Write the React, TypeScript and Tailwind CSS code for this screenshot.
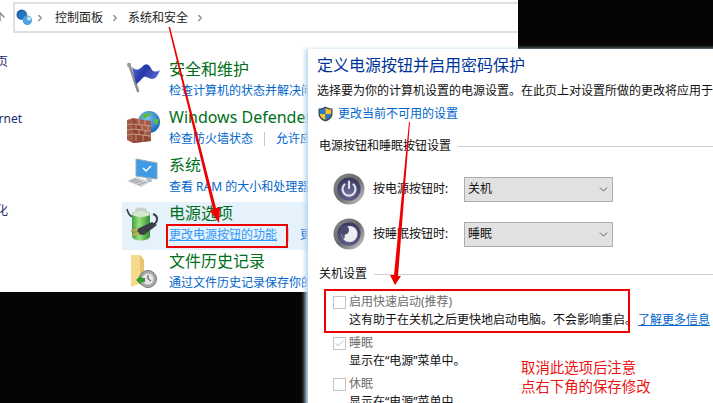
import { ArrowUp, ChevronDown, ChevronRight, Check } from "lucide-react";

const font = "font-['Noto_Sans','Noto_Sans_CJK_SC',sans-serif]";

function FlagIcon() {
  return (
    <svg width="36" height="32" viewBox="0 0 36 32">
      <defs>
        <linearGradient id="flag" x1="0" y1="0" x2="1" y2="0.4">
          <stop offset="0" stopColor="#5c70d8" />
          <stop offset="0.5" stopColor="#2437a8" />
          <stop offset="1" stopColor="#5568cc" />
        </linearGradient>
      </defs>
      <path d="M3 2L12 29" stroke="#8f8f8f" strokeWidth="2.6" strokeLinecap="round" />
      <circle cx="3" cy="3" r="2" fill="#9a9a9a" />
      <path d="M6 5C11 10 14 7 18 3C22 1 24 4 26 8C28 10 31 10 34 8C32 13 30 17 26 17C22 17 21 14 18 15C15 17 13 21 10 22Z" fill="url(#flag)" />
    </svg>
  );
}

function FirewallIcon() {
  return (
    <svg width="36" height="34" viewBox="0 0 36 34">
      <defs>
        <radialGradient id="globe" cx="0.4" cy="0.35" r="0.7">
          <stop offset="0" stopColor="#7cc8f5" />
          <stop offset="1" stopColor="#1560c0" />
        </radialGradient>
      </defs>
      <circle cx="23" cy="12" r="11" fill="url(#globe)" />
      <path d="M15 7C18 3 23 2 26 4C24 7 20 6 19 9Z" fill="#5fbb3c" />
      <path d="M28 8L33 10L31 15L28 13Z" fill="#5fbb3c" />
      <path d="M1 10L7 8L25 11V31L7 33L1 30Z" fill="#a45a45" />
      <path d="M7 8V33L25 31" fill="#8f4836" />
      <path d="M1 15L7 14L25 16M1 20L7 19L25 21M1 25L7 24L25 26M13 9V14M19 10V15M10 14V19M16 15V20M22 15V20M13 19V25M19 20V26M10 24V31M17 25V31" stroke="#d3a796" strokeWidth="0.8" fill="none" />
    </svg>
  );
}

function MonitorIcon() {
  return (
    <svg width="34" height="30" viewBox="0 0 34 30">
      <path d="M10 1L31 5V21L10 18Z" fill="#3f9be4" stroke="#8fa9bb" strokeWidth="1" />
      <path d="M17 10L20 13L25 8" stroke="#ffffff" strokeWidth="1.5" fill="none" />
      <path d="M20 20L21 24H26L25 20Z" fill="#b5bcc2" />
      <path d="M1 23L10 19L24 24L15 29Z" fill="#cfd3d6" />
      <path d="M4 23L10 21M6 24L13 22M9 25L16 23M12 27L20 24" stroke="#9aa0a5" strokeWidth="1" />
    </svg>
  );
}

function BatteryIcon() {
  return (
    <svg width="34" height="36" viewBox="0 0 34 36">
      <defs>
        <linearGradient id="batt" x1="0" y1="0" x2="1" y2="0">
          <stop offset="0" stopColor="#3e9f3e" />
          <stop offset="0.4" stopColor="#9be07f" />
          <stop offset="1" stopColor="#2f8f35" />
        </linearGradient>
      </defs>
      <path d="M1 3C2 8 4 10 7 11" stroke="#3b4046" strokeWidth="1.6" fill="none" />
      <path d="M27 8C33 10 32 17 26 19" stroke="#3b4046" strokeWidth="2" fill="none" />
      <ellipse cx="15" cy="4" rx="6" ry="2.5" fill="#c8d0c8" />
      <path d="M6 8C6 4 24 4 24 8V30C24 36 6 36 6 30Z" fill="url(#batt)" />
      <ellipse cx="15" cy="8" rx="9" ry="3" fill="#d4e8cf" />
      <path d="M11 23L26 16L31 19L18 29L12 28Z" fill="#3a3f45" />
      <path d="M12 23L5 25M13 27L6 29" stroke="#c9a64e" strokeWidth="2" />
    </svg>
  );
}

function HistoryIcon() {
  return (
    <svg width="34" height="34" viewBox="0 0 34 34">
      <path d="M5 1H14L18 6V28L5 33Z" fill="#f5d98c" />
      <path d="M14 1L18 6V28L14 30Z" fill="#e6c470" />
      <circle cx="22" cy="25" r="8.5" fill="#a8aaa8" stroke="#777" strokeWidth="1" />
      <circle cx="22" cy="25" r="5.5" fill="#e6e6e6" />
      <path d="M22 21V25L25 27" stroke="#444" strokeWidth="1" fill="none" />
      <path d="M10 26L15 21V24H19V28H15V31Z" fill="#2f9a2f" />
    </svg>
  );
}

function ControlPanelIcon() {
  return (
    <svg width="17" height="17" viewBox="0 0 18 18">
      <circle cx="6" cy="6" r="5.5" fill="#1a5fa8" />
      <path d="M1 6L8 1L12 5L10 11L4 10Z" fill="#2a74bd" />
      <circle cx="12" cy="12" r="5" fill="#4fa3dc" />
      <path d="M12 12V8A4 4 0 0 1 16 12Z" fill="#cfe8f7" />
    </svg>
  );
}

function ShieldIcon() {
  return (
    <svg width="15" height="16" viewBox="0 0 15 16">
      <path d="M7.5 0.5C10 2 12 2.6 14.5 2.6V8C14.5 11.8 11 14.5 7.5 15.5C4 14.5 0.5 11.8 0.5 8V2.6C3 2.6 5 2 7.5 0.5Z" fill="#3c4a5c" />
      <path d="M7.5 2V8H1.8V3.6C3.8 3.5 5.6 3 7.5 2Z" fill="#2c78c9" />
      <path d="M7.5 2C9.4 3 11.2 3.5 13.2 3.6V8H7.5Z" fill="#f7c331" />
      <path d="M1.8 8H7.5V14C4.5 13 2 11 1.8 8Z" fill="#f7c331" />
      <path d="M7.5 8H13.2C13 11 10.5 13 7.5 14Z" fill="#2c78c9" />
    </svg>
  );
}

function ButtonIcon({ kind, id }: { kind: "power" | "sleep"; id: string }) {
  return (
    <svg width="32" height="32" viewBox="0 0 32 32">
      <defs>
        <linearGradient id={id + "ring"} x1="0" y1="0" x2="1" y2="1">
          <stop offset="0" stopColor="#8a8a8c" />
          <stop offset="0.5" stopColor="#6a6a6e" />
          <stop offset="1" stopColor="#d0d0d0" />
        </linearGradient>
        <radialGradient id={id + "core"} cx="0.5" cy="0.7" r="0.7">
          <stop offset="0" stopColor="#6f7099" />
          <stop offset="1" stopColor="#35355a" />
        </radialGradient>
      </defs>
      <circle cx="16" cy="16" r="15.5" fill={`url(#${id}ring)`} />
      <circle cx="16" cy="16" r="11.5" fill={`url(#${id}core)`} />
      {kind === "power" ? (
        <path d="M11.5 11.5A6.5 6.5 0 1 0 20.5 11.5M16 8.5V15" stroke="#e2e2ea" strokeWidth="2.2" fill="none" strokeLinecap="round" />
      ) : (
        <>
          <circle cx="16.5" cy="16" r="8" fill="#eeeef2" />
          <path d="M12 9.5A8 8 0 0 0 11 21.5C12.5 17 12 13 12 9.5Z" fill="#55557a" />
          <circle cx="11.5" cy="12" r="4.5" fill="#4a4a6e" />
        </>
      )}
    </svg>
  );
}

function CpRow({ icon, title, links, active }: { icon: React.ReactNode; title: string; links: string[]; active?: boolean }) {
  return (
    <div className={`flex h-12 ${active ? "bg-[#e5f1fb]" : ""}`}>
      <div className="w-[47px] pl-1 pt-1 shrink-0">{icon}</div>
      <div className="min-w-0">
        <div className="h-6 leading-6 mt-[-1px] text-[16px] text-[#00701a] whitespace-nowrap">{title}</div>
        <div className="flex items-center h-[19px] text-[12px] leading-[19px] text-[#0066cc] whitespace-nowrap">
          {links.map((l, i) => (
            <span key={l} className={i > 0 ? "ml-[11px] pl-[11px] border-l border-[#c8c8c8] leading-[14px]" : ""}>
              <span className={active && i === 0 ? "underline text-[#3399ff]" : ""}>{l}</span>
            </span>
          ))}
        </div>
      </div>
    </div>
  );
}

function PowerSelect({ label, value, kind, id }: { label: string; value: string; kind: "power" | "sleep"; id: string }) {
  return (
    <div className="flex items-center h-8 pl-[25px]">
      <ButtonIcon kind={kind} id={id} />
      <div className="w-[99px] pl-2 text-[12px] text-[#111]">{label}</div>
      <div className="w-[149px] h-[25px] flex items-center justify-between pl-[3px] pr-[2px] bg-[#e1e1e1] border border-[#adadad] text-[12px] text-[#111]">
        {value}
        <ChevronDown size={13} strokeWidth={1.5} className="text-[#444]" />
      </div>
    </div>
  );
}

function SectionHead({ text }: { text: string }) {
  return (
    <div className="flex items-center gap-[7px] pl-[11px] h-[18px] text-[12px] text-[#111]">
      <span className="whitespace-nowrap">{text}</span>
      <div className="grow h-px bg-[#cfcfcf]" />
    </div>
  );
}

function PowerOption({ label, desc, checked, extra }: { label: string; desc: string; checked?: boolean; extra?: boolean }) {
  return (
    <div className="pl-[25px]">
      <div className="flex items-center h-4 text-[12px] text-[#6d6d6d]">
        <div className="w-[13px] h-[13px] bg-white border border-[#c4c4c4] flex items-center justify-center mr-[3px]">
          {checked && <Check size={11} strokeWidth={1.5} className="text-[#9a9a9a]" />}
        </div>
        {label}
      </div>
      <div className="flex items-center h-[18px] mt-[1px] pl-4 text-[12px] text-[#111] whitespace-nowrap">
        {desc}
        {extra && <span className="ml-[1px] text-[#0066cc] underline">了解更多信息</span>}
      </div>
    </div>
  );
}

export default function App() {
  return (
    <div className={`relative w-[713px] h-[403px] bg-[#050505] overflow-hidden ${font}`}>
      {/* control panel window */}
      <div className="w-[518px] h-[292px] bg-white overflow-hidden">
        <div className="flex h-[58px]">
          <div className="w-[13px] pt-[10px] text-[#777] overflow-hidden">
            <ArrowUp size={14} strokeWidth={2} className="-ml-[7px]" />
          </div>
          <div className="grow h-[31px] mt-[2px] flex items-center pl-px border-2 border-r-0 border-[#e0e0e0] text-[12px] text-[#222]">
            <ControlPanelIcon />
            <ChevronRight size={10} strokeWidth={3} className="ml-[2px] mr-[10px] text-[#888]" />
            控制面板
            <ChevronRight size={10} strokeWidth={3} className="ml-[7px] mr-[8px] text-[#888]" />
            系统和安全
            <ChevronRight size={10} strokeWidth={3} className="ml-[7px] text-[#888]" />
          </div>
        </div>
        <div className="flex">
          <div className="w-[122px] shrink-0 text-[12px] text-[#1a2b6b]">
            <div className="w-[8px] flex justify-end whitespace-nowrap h-4 leading-4 -mt-[4px]">控制面板主页</div>
            <div className="w-[22px] flex justify-end whitespace-nowrap h-4 leading-4 mt-[41px]">网络和 Internet</div>
            <div className="w-[8px] flex justify-end whitespace-nowrap h-4 leading-4 mt-[76px]">外观和个性化</div>
          </div>
          <div className="grow min-w-0">
            <CpRow icon={<FlagIcon />} title="安全和维护" links={["检查计算机的状态并解决问题"]} />
            <CpRow icon={<FirewallIcon />} title="Windows Defender 防火墙" links={["检查防火墙状态", "允许应用通过 Windows 防火墙"]} />
            <CpRow icon={<MonitorIcon />} title="系统" links={["查看 RAM 的大小和处理器速度"]} />
            <CpRow icon={<BatteryIcon />} title="电源选项" links={["更改电源按钮的功能", "更改计算机睡眠时间"]} active />
            <CpRow icon={<HistoryIcon />} title="文件历史记录" links={["通过文件历史记录保存你的文件备份副本"]} />
          </div>
        </div>
      </div>

      {/* power buttons dialog */}
      <div className="absolute left-[308px] top-[49px] w-[420px] h-[370px] bg-white shadow-[-3px_0_4px_#bcd9f2]">
        <div className="pl-[9px] pt-1 h-7 leading-6 text-[16px] text-[#003399] whitespace-nowrap">定义电源按钮并启用密码保护</div>
        <div className="pl-[9px] h-[18px] mt-[5px] leading-[18px] text-[12px] text-[#111] whitespace-nowrap">选择要为你的计算机设置的电源设置。在此页上对设置所做的更改将应用于所有电源计划。</div>
        <div className="flex items-center gap-[5px] pl-[10px] h-[18px] mt-[5px] text-[12px] text-[#0066cc]">
          <ShieldIcon />
          更改当前不可用的设置
        </div>
        <div className="mt-[14px]"><SectionHead text="电源按钮和睡眠按钮设置" /></div>
        <div className="mt-[18px] flex flex-col gap-[13px]">
          <PowerSelect label="按电源按钮时:" value="关机" kind="power" id="pw" />
          <PowerSelect label="按睡眠按钮时:" value="睡眠" kind="sleep" id="sl" />
        </div>
        <div className="mt-[15px]"><SectionHead text="关机设置" /></div>
        <div className="mt-[11px] flex flex-col gap-[6px]">
          <PowerOption label="启用快速启动(推荐)" desc="这有助于在关机之后更快地启动电脑。不会影响重启。" extra />
          <PowerOption label="睡眠" desc="显示在“电源”菜单中。" checked />
          <PowerOption label="休眠" desc="显示在“电源”菜单中。" />
        </div>
      </div>

      {/* annotations pasted over the screenshot */}
      <div className="absolute left-[166px] top-[224px] w-[122px] h-[24px] border-2 border-[#ee0000]" />
      <div className="absolute left-[324px] top-[289px] w-[306px] h-[44px] border-2 border-[#ee0000]" />
      <div className="absolute left-[521px] top-[358px] text-[14.4px] leading-[19px] text-[#ee1111] whitespace-nowrap">
        取消此选项后注意
        <br />
        点右下角的保存修改
      </div>
      <svg className="absolute left-0 top-0 pointer-events-none" width="713" height="403" viewBox="0 0 713 403">
        <path d="M168.5 27L170 27L216 208L220 207L219 223L210 211L213 209Z" fill="#ee0000" />
        <path d="M409 122L410 122L398 276L401 276L395 285L390 275L394 275Z" fill="#ee0000" />
      </svg>
    </div>
  );
}
